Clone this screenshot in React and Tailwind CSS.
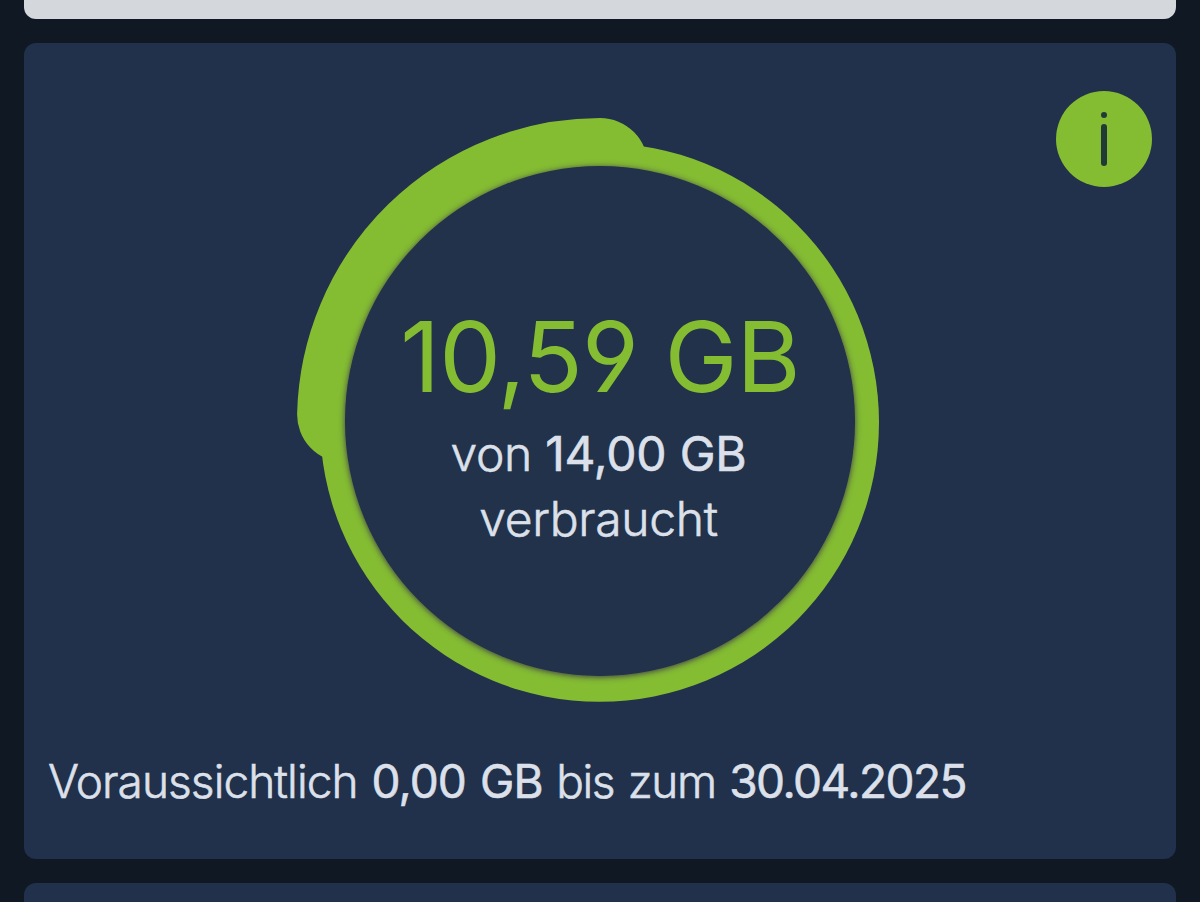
import React from "react";

const usage = {
  used: "10,59 GB",
  total: "14,00 GB",
  forecast: "0,00 GB",
  until: "30.04.2025",
};

// Ring mit dem verbrauchten Volumen
const UsageRing = () => (
  <svg viewBox="0 0 612 600" className="col-start-1 row-start-1 h-[600px] w-[612px]">
    <defs>
      <filter id="innerShadow" x="-10%" y="-10%" width="120%" height="120%">
        <feDropShadow dx="0" dy="1" stdDeviation="3" floodColor="#3a3448" floodOpacity="1" />
      </filter>
    </defs>
    <circle cx="305.5" cy="312.3" r="279.5" fill="#84bd32" />
    <path d="M306 56 A255 255 0 0 0 51.1 304.5" fill="none" stroke="#84bd32" strokeWidth="96" strokeLinecap="round" />
    <circle cx="306" cy="311" r="255" fill="#21304b" filter="url(#innerShadow)" />
  </svg>
);

const InfoButton = () => (
  <button
    aria-label="Info"
    className="flex h-24 w-24 flex-col items-center gap-1.5 rounded-full bg-[#84bd32] pt-[21px]"
  >
    <span className="h-1.5 w-1.5 rounded-full bg-[#203a38]" />
    <span className="h-[42px] w-1.5 rounded-full bg-[#203a38]" />
  </button>
);

const App = () => {
  return (
    <div className="flex h-[902px] flex-col gap-6 overflow-hidden bg-[#101824] px-6 font-['Inter',sans-serif] text-[#dce0ea]">
      <div className="h-[19px] shrink-0 rounded-b-xl bg-[#d4d7dc]" />

      <section className="flex h-[816px] shrink-0 flex-col rounded-xl bg-[#21304b] px-6 pt-12">
        <div className="-mr-6 grid grid-cols-[1fr_612px_1fr] pr-6">
          <div className="col-start-3 flex justify-end">
            <InfoButton />
          </div>
          <div className="col-start-2 row-start-1 mt-[19px] grid">
            <UsageRing />
            <div className="col-start-1 row-start-1 flex flex-col items-center whitespace-nowrap pt-[188px]">
              <span className="text-[98px] leading-[118px] tracking-[-1px] text-[#84bd32] [font-feature-settings:'cv04']">
                {usage.used}
              </span>
              <p className="mt-[5px] mr-[3px] text-center text-[48px] leading-[65px] font-light tracking-[-0.3px] [-webkit-text-stroke:0.6px]">
                von <span className="font-normal tracking-[-0.2px]">{usage.total}</span>
                <br />
                verbraucht
              </p>
            </div>
          </div>
        </div>

        <p className="mt-[39px] text-[46px] leading-[64px] font-light tracking-[-0.95px] [word-spacing:2px] whitespace-nowrap [-webkit-text-stroke:0.6px]">
          Voraussichtlich <span className="font-normal tracking-[-0.9px]">{usage.forecast}</span>
          <span className="tracking-[-1.4px]"> bis zum </span>
          <span className="font-normal tracking-[-1.5px]">{usage.until}</span>
        </p>
      </section>

      <div className="h-20 shrink-0 rounded-t-xl bg-[#21304b]" />
    </div>
  );
};

export default App;
